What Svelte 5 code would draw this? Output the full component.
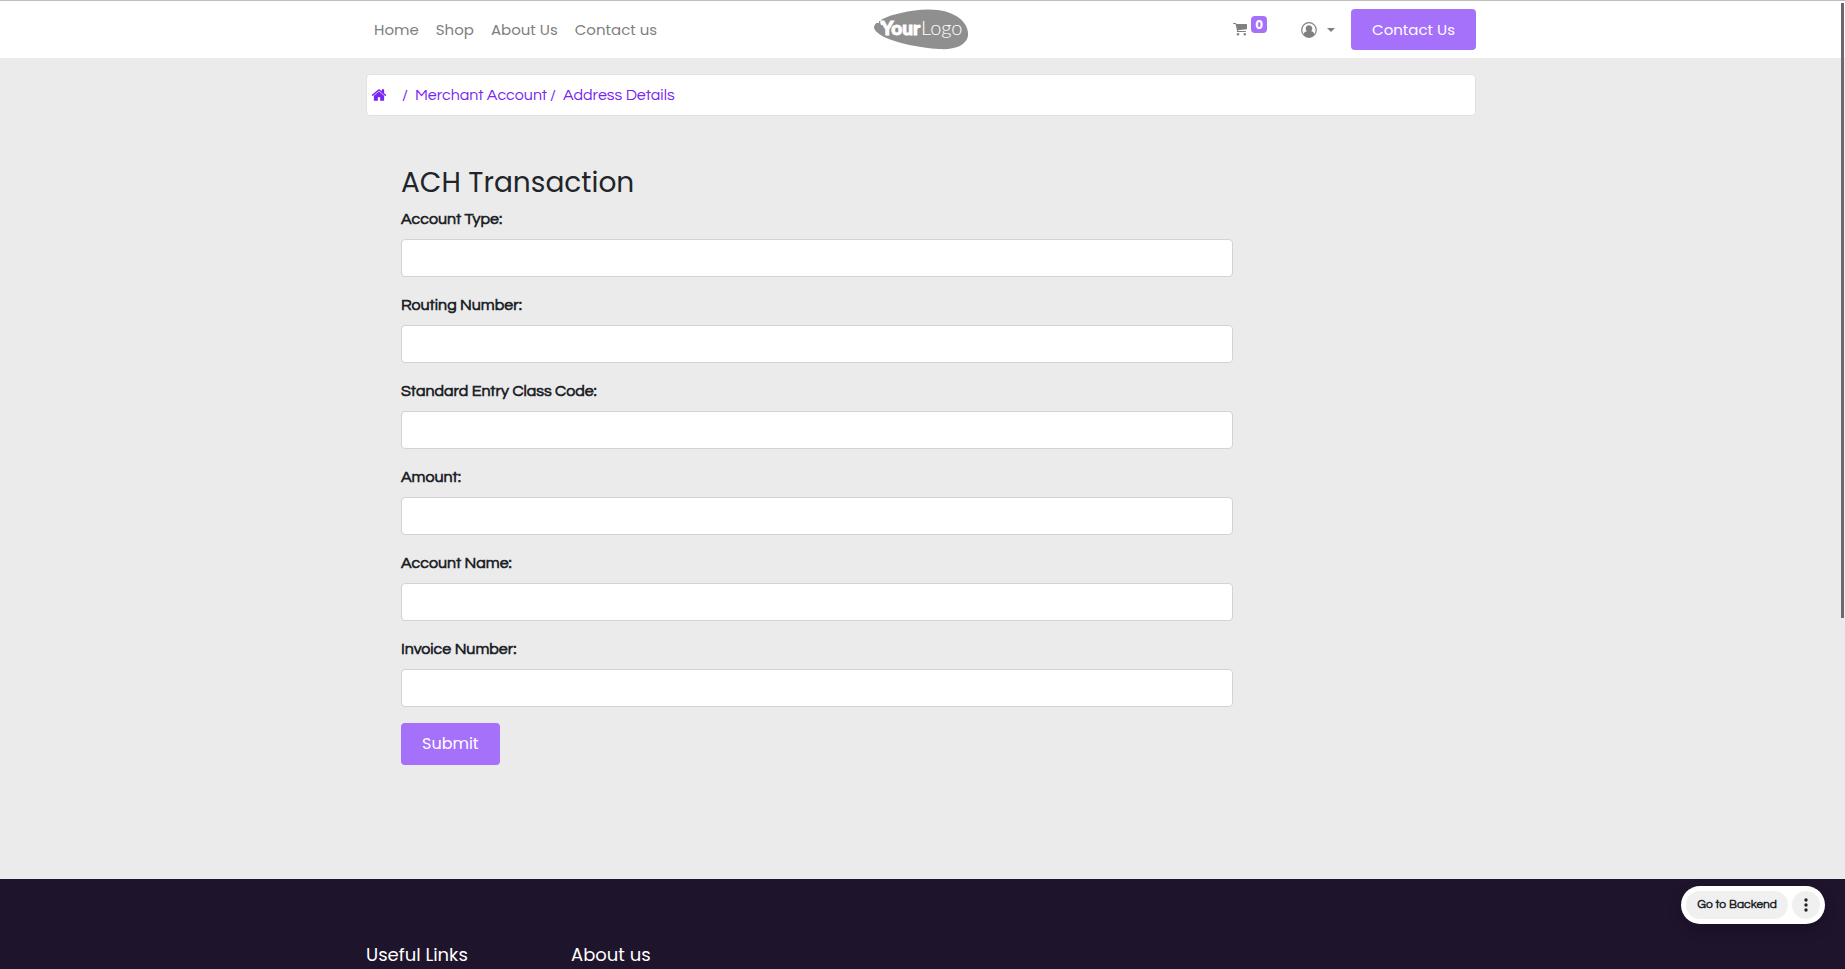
<script>
  const navLinks = ['Home', 'Shop', 'About Us', 'Contact us'];
  const fields = [
    { id: 'account-type', label: 'Account Type:' },
    { id: 'routing-number', label: 'Routing Number:' },
    { id: 'entry-class', label: 'Standard Entry Class Code:' },
    { id: 'amount', label: 'Amount:' },
    { id: 'account-name', label: 'Account Name:' },
    { id: 'invoice-number', label: 'Invoice Number:' }
  ];
</script>

<div class="page">
  <header>
    <div class="container bar">
      <nav>
        {#each navLinks as link}
          <a href="#top">{link}</a>
        {/each}
      </nav>

      <a class="logo" href="#top" aria-label="Your Logo">
        <svg width="95" height="42" viewBox="0 0 95 42">
          <path fill="#8f8f8f" d="M0 18C1 12 13 7 27 4C44 0 62 -1 76 4C89 9 95 18 94 27C92 37 80 41 65 40C46 39 23 34 10 28C3 24 0 21 0 18Z" />
          <path fill="#fff" d="M3 10h4v2h-2v2h-2zM6 13h3v3h-2z" />
          <text x="7" y="26" class="bold">Your</text>
          <text x="47" y="26" class="thin">Logo</text>
        </svg>
      </a>

      <div class="tools">
        <a class="cart" href="#cart" aria-label="Cart">
          <svg width="14" height="13" viewBox="0 0 14 13" fill="#808080">
            <path d="M0 .5Q0 0 .5 0H2.700Q3.200 0 3.400 1H13.500Q14 1 14 1.500V5.600Q14 6.100 13.500 6.200L5 7.200L5.100 8.100H12.500Q13 8.100 13 8.600T12.500 9.100H4.300Q3.700 9.100 3.800 8.500L4.100 7.700L2.500 1H.5Q0 1 0 .5Z" />
            <circle cx="5" cy="11.300" r="1.200" />
            <circle cx="11.800" cy="11.300" r="1.200" />
          </svg>
          <span class="badge">0</span>
        </a>
        <button class="user" aria-label="Account">
          <svg width="16" height="16" viewBox="0 0 16 16">
            <circle cx="8" cy="8" r="7.300" fill="none" stroke="#808080" stroke-width="1.200" />
            <path fill="#808080" d="M8 3.200C10 3.200 11.300 4.600 11.300 6.400C11.300 7.600 10.800 8.700 10 9.300C12 9.500 13.200 10.700 13.500 12.500Q11.300 15.200 8 15.200T2.500 12.500C2.800 10.700 4 9.500 6 9.300C5.200 8.700 4.700 7.600 4.700 6.400C4.700 4.600 6 3.200 8 3.200Z" />
          </svg>
          <svg width="8" height="4" viewBox="0 0 8 4"><path fill="#808080" d="M0 0h8L4 4z" /></svg>
        </button>
        <a class="btn small" href="#contact">Contact Us</a>
      </div>
    </div>
  </header>

  <main>
    <div class="container">
      <nav class="crumbs" aria-label="Breadcrumb">
        <a href="#top" aria-label="Home page">
          <svg width="16" height="16" viewBox="0 0 1792 1792" fill="currentColor">
            <path d="M1472 992v480q0 26-19 45t-45 19h-384v-384h-256v384h-384q-26 0-45-19t-19-45v-480q0-1 .5-3t.5-3l575-474 575 474q1 2 1 6zm223-69l-62 74q-8 9-21 11h-3q-13 0-21-7l-692-577-692 577q-12 8-24 7-13-2-21-11l-62-74q-8-10-7-23.500t11-21.500l719-599q32-26 76-26t76 26l244 204v-195q0-14 9-23t23-9h192q14 0 23 9t9 23v408l219 182q10 8 11 21.500t-7 23.500z" />
          </svg>
        </a>
        <span class="first">/</span>
        <a class="crumb" href="#merchant">Merchant Account</a>
        <span>/</span>
        <a class="crumb" href="#address">Address Details</a>
      </nav>

      <form>
        <h1>ACH Transaction</h1>
        {#each fields as field}
          <div class="field">
            <label for={field.id}>{field.label}</label>
            <input id={field.id} type="text" />
          </div>
        {/each}
        <button class="btn" type="button">Submit</button>
      </form>
    </div>
  </main>

  <footer>
    <div class="container columns">
      <h2>Useful Links</h2>
      <h2>About us</h2>
    </div>
  </footer>
</div>

<div class="backend">
  <button>Go to Backend</button>
  <button class="more" aria-label="More">
    <svg width="4" height="14" viewBox="0 0 4 14" fill="#212529">
      <circle cx="2" cy="2" r="1.700" /><circle cx="2" cy="7" r="1.700" /><circle cx="2" cy="12" r="1.700" />
    </svg>
  </button>
</div>
<div class="thumb"></div>

<style>
  :global(body) {
    margin: 0;
    background: #ebebeb;
  }
  .page {
    display: flex;
    flex-direction: column;
    min-height: 100vh;
    font: 16px/24px Poppins, Inter, sans-serif;
    color: #212529;
  }
  .page, .page :global(*), .backend, .backend * {
    box-sizing: border-box;
  }
  .container {
    width: 100%;
    max-width: 1110px;
    margin: 0 auto;
  }
  header {
    padding-right: 3px;
    background: #fff;
    border-top: 1px solid #c0c0c0;
  }
  .bar {
    display: grid;
    grid-template-columns: 1fr auto 1fr;
    align-items: center;
    height: 57px;
  }
  .bar nav {
    display: flex;
    gap: 17px;
    padding-left: 8px;
    font-size: 15px;
  }
  a {
    color: inherit;
    text-decoration: none;
  }
  .bar nav a {
    color: #808080;
  }
  .logo {
    display: flex;
  }
  .logo text {
    fill: #fff;
    font-family: Lato, sans-serif;
  }
  .bold {
    font-size: 19px;
    font-weight: 900;
    stroke: #fff;
    stroke-width: 1;
  }
  .thin {
    font-size: 20px;
    font-weight: 300;
  }
  .tools {
    display: flex;
    justify-content: flex-end;
    align-items: center;
  }
  .cart {
    display: flex;
    align-items: center;
    gap: 4px;
    margin-right: 34px;
  }
  .badge {
    width: 16px;
    margin-bottom: 10px;
    border-radius: 4px;
    background: #a570fa;
    color: #fff;
    font-size: 12px;
    line-height: 17px;
    font-weight: 700;
    text-align: center;
  }
  button {
    border: 0;
    padding: 0;
    font: inherit;
    color: inherit;
  }
  .user {
    display: flex;
    align-items: center;
    gap: 10px;
    margin-right: 16px;
    background: none;
  }
  .btn {
    padding: 9px 21px;
    border-radius: 4px;
    background: #a570fa;
    color: #fff;
  }
  .small {
    font-size: 15px;
    line-height: 23px;
  }
  main {
    padding: 16px 3px 114px 0;
  }
  .crumbs {
    display: flex;
    align-items: center;
    height: 42px;
    padding: 0 4px;
    background: #fff;
    border: 1px solid #dee2e6;
    border-radius: 4px;
    font-family: Questrial, Poppins, Inter, sans-serif;
    color: #7a26f0;
  }
  .crumbs svg {
    display: block;
  }
  .first {
    margin-left: 15px;
  }
  .crumb {
    margin: 0 3px 0 7px;
  }
  form {
    padding: 50px 0 0 35px;
  }
  h1 {
    margin: 0 0 7px;
    font-size: 28px;
    line-height: 34px;
    font-weight: 400;
  }
  .field {
    width: 832px;
    max-width: 100%;
    margin-bottom: 16px;
  }
  label {
    display: block;
    margin-bottom: 8px;
    font-family: Questrial, Poppins, Inter, sans-serif;
    font-weight: 700;
  }
  input {
    display: block;
    width: 100%;
    height: 38px;
    padding: 6px 12px;
    border: 1px solid #ced4da;
    border-radius: 4px;
    background: #fff;
    font: inherit;
  }
  footer {
    flex: 1;
    padding: 64px 3px 0 0;
    background: #1e142c;
    color: #fff;
  }
  .columns {
    display: grid;
    grid-template-columns: 205px 1fr;
  }
  h2 {
    margin: 0;
    font-size: 18px;
    line-height: 24px;
    font-weight: 400;
  }
  .backend {
    position: fixed;
    right: 20px;
    bottom: 45px;
    display: flex;
    gap: 4px;
    padding: 5px;
    border-radius: 19px;
    background: #fff;
    box-shadow: 0 6px 14px rgba(0, 0, 0, 0.2);
    font: 700 12px/28px Questrial, Inter, sans-serif;
    color: #212529;
  }
  .backend button {
    padding: 0 11px;
    border-radius: 14px;
    background: #f0f0f0;
  }
  .backend .more {
    display: grid;
    place-items: center;
    width: 28px;
    padding: 0;
  }
  .thumb {
    position: fixed;
    top: 3px;
    right: 1px;
    width: 3px;
    height: 615px;
    background: #6a6a6a;
  }
</style>
